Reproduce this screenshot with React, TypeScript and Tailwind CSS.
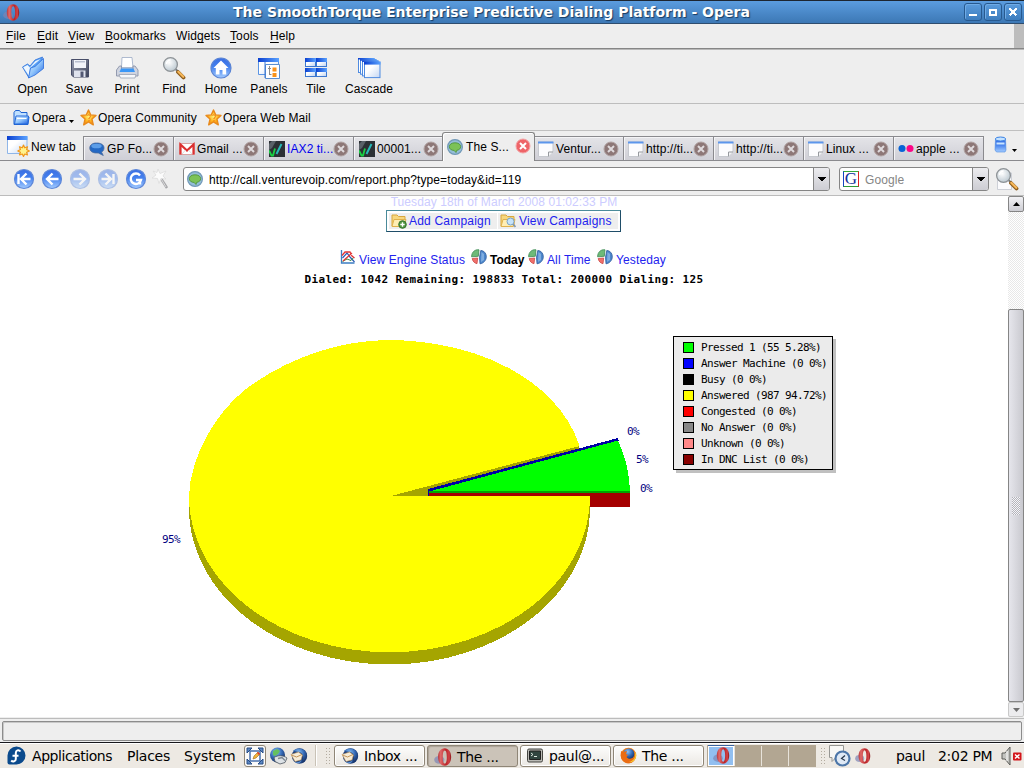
import type { ReactNode } from "react";

const SANS = "font-['Liberation_Sans',sans-serif]";
const DEJA = "font-['DejaVu_Sans',sans-serif]";

function Defs() {
  return (
    <svg className="block size-0" aria-hidden="true">
      <defs>
        <linearGradient id="blue" x1="0" y1="0" x2="0" y2="1">
          <stop offset="0" stopColor="#3a6ee2" />
          <stop offset="0.45" stopColor="#4581ee" />
          <stop offset="1" stopColor="#a4ccff" />
        </linearGradient>
        <linearGradient id="folder" x1="0" y1="0" x2="1" y2="1">
          <stop offset="0" stopColor="#e8f4ff" />
          <stop offset="0.5" stopColor="#8fc4fb" />
          <stop offset="1" stopColor="#1b5fe0" />
        </linearGradient>
        <linearGradient id="pane" x1="0" y1="0" x2="1" y2="1">
          <stop offset="0.4" stopColor="#ffffff" />
          <stop offset="1" stopColor="#c3d6f3" />
        </linearGradient>
        <linearGradient id="bar" x1="0" y1="0" x2="1" y2="0">
          <stop offset="0" stopColor="#0a3fd0" />
          <stop offset="1" stopColor="#5aa2ff" />
        </linearGradient>
        <linearGradient id="steel" x1="0" y1="0" x2="1" y2="1">
          <stop offset="0" stopColor="#9aa0b4" />
          <stop offset="1" stopColor="#3c4258" />
        </linearGradient>
        <linearGradient id="red" x1="0" y1="0" x2="1" y2="0">
          <stop offset="0" stopColor="#b8383c" />
          <stop offset="0.2" stopColor="#e06a6a" />
          <stop offset="0.6" stopColor="#b82428" />
          <stop offset="0.85" stopColor="#d24448" />
          <stop offset="1" stopColor="#8a1418" />
        </linearGradient>
        <radialGradient id="glass" cx="0.4" cy="0.35" r="0.7">
          <stop offset="0" stopColor="#ffffff" />
          <stop offset="1" stopColor="#b9c6cf" />
        </radialGradient>
        <radialGradient id="star" cx="0.5" cy="0.45" r="0.6">
          <stop offset="0" stopColor="#fff27a" />
          <stop offset="0.5" stopColor="#ffb520" />
          <stop offset="1" stopColor="#f07c10" />
        </radialGradient>
        <radialGradient id="globe" cx="0.4" cy="0.3" r="0.8">
          <stop offset="0" stopColor="#8cc4f8" />
          <stop offset="0.5" stopColor="#3468b4" />
          <stop offset="1" stopColor="#12244e" />
        </radialGradient>
      </defs>
    </svg>
  );
}

function OperaIcon({ size = 17 }: { size?: number }) {
  return (
    <svg width={size} height={size} viewBox="0 0 17 17" className="block shrink-0">
      <ellipse cx="5" cy="11.200" rx="4.800" ry="3.700" fill="#7e84b4" opacity="0.700" />
      <path fillRule="evenodd" fill="url(#red)" d="M10 .3c3.800 0 6.200 3.500 6.200 8.200s-2.400 8.200-6.200 8.200-6.200-3.500-6.200-8.200S6.200.3 10 .3zM10.200 2.300c-1.300 0-1.900 2.600-1.900 6.200s.6 6.200 1.900 6.200 1.900-2.600 1.900-6.200-.6-6.200-1.900-6.200z" />
    </svg>
  );
}

function OpenIcon() {
  return (
    <svg width="24" height="24" viewBox="0 0 24 24">
      <path d="M1.500 11l5-3 2.500 2L14 4l7.500-3-1 5L8 22z" fill="#5aa0f4" stroke="#2f72dc" strokeWidth="0.800" />
      <path d="M2.200 11.300L6.500 9l2.300 2.500L14.500 5l5-2L9 12 8 20z" fill="#eef7ff" />
      <path d="M7.500 22L9.500 12l4.500-1.500 8.500-8v10L14 19z" fill="url(#folder)" stroke="#2a6cdc" strokeWidth="0.800" strokeLinejoin="round" />
    </svg>
  );
}

function SaveIcon() {
  return (
    <svg width="24" height="24" viewBox="0 0 24 24">
      <path d="M3.500 3.500h17v17.500H5.500l-2-2z" fill="url(#steel)" stroke="#474d68" />
      <path d="M6 4h12v8H6z" fill="#f1f3f9" />
      <path d="M7 5h10v1.500H7z" fill="#b8bfd0" />
      <path d="M6 14.500h11.500V21H6z" fill="#dfe3ee" />
      <path d="M12.500 15.500h3V21h-3z" fill="#525873" />
    </svg>
  );
}

function PrintIcon() {
  return (
    <svg width="24" height="24" viewBox="0 0 24 24">
      <path d="M7 1.500h10l1 10H6.500z" fill="#fff" stroke="#9aaac4" strokeWidth="0.800" />
      <path d="M4.500 10h2v3h11.500v-3h2l3 4v6H1.500v-6z" fill="#cfd4e0" stroke="#8b93a8" strokeWidth="0.900" />
      <path d="M6 12.500h12.500l1.500 3.500H4.500z" fill="#3a97f7" />
      <path d="M4 18.500h17l-1 3.500H5.500z" fill="#f6f8fb" stroke="#9ba2b4" strokeWidth="0.800" />
    </svg>
  );
}

function FindIcon({ page = false }: { page?: boolean }) {
  return (
    <svg width="24" height="24" viewBox="0 0 24 24">
      {page && <path d="M2.500 6h14v16.500h-14z" fill="#fbfbfd" stroke="#c3c7cf" strokeWidth="0.800" />}
      <path d="M13.500 13l3 3" stroke="#777b80" strokeWidth="2" />
      <path d="M16 16l5.500 5.500" stroke="#8c5a18" strokeWidth="3.800" strokeLinecap="round" />
      <path d="M16.300 15.800l5 5" stroke="#f6b75a" strokeWidth="2.200" strokeLinecap="round" />
      <circle cx="8.500" cy="8.500" r="6.900" fill="url(#glass)" stroke="#8d9296" strokeWidth="1.300" />
      <path d="M4.500 8a4 4 0 0 1 4-4" stroke="#fff" strokeWidth="1.500" fill="none" />
    </svg>
  );
}

function HomeIcon() {
  return (
    <svg width="24" height="24" viewBox="0 0 24 24">
      <circle cx="12" cy="12" r="10" fill="url(#blue)" stroke="#5a84d4" strokeWidth="1.200" />
      <path d="M12 4.500l7.500 7.500h-2.300v6.500h-3.700v-4.500h-3v4.500H6.800V12H4.500z" fill="#fff" />
    </svg>
  );
}

function PanelsIcon() {
  return (
    <svg width="24" height="24" viewBox="0 0 24 24">
      <path d="M1.500 2.500h20v16h-20z" fill="url(#pane)" stroke="#5a94e4" />
      <path d="M1 2h21v4H1z" fill="url(#bar)" />
      <path d="M8.500 8.500h14v14h-14z" fill="#fff" stroke="#5b8fd0" />
      <path d="M8 6v16" stroke="#3c78d4" />
      <path d="M12.500 10v9M11 12.500h3M12.500 18.500h2" stroke="#8c8c8c" fill="none" />
      <path d="M15.500 11.500h4v4h-4zM15.500 17h4v4h-4z" fill="#fa9218" />
    </svg>
  );
}

function TileIcon() {
  return (
    <svg width="24" height="24" viewBox="0 0 24 24" shapeRendering="crispEdges">
      {[1, 12].map((x) =>
        [2, 12].map((y) => (
          <g key={`${x}-${y}`}>
            <rect x={x} y={y} width="11" height="9" fill="#3c78d0" />
            <rect x={x + 1} y={y + 1} width="9" height="7" fill="url(#pane)" />
            <rect x={x} y={y} width="11" height="4" fill="url(#bar)" />
          </g>
        )),
      )}
    </svg>
  );
}

function CascadeIcon() {
  return (
    <svg width="24" height="24" viewBox="0 0 24 24">
      {[0, 2, 4, 6].map((d) => (
        <g key={d}>
          <rect x={1.500 + d} y={2.500 + d * 0.600} width="15.500" height={14 + d * 0.250} fill="url(#pane)" stroke="#4f8be0" />
          <rect x={1 + d} y={2 + d * 0.600} width="16.500" height={d === 6 ? 3 : 1.500} fill="url(#bar)" />
        </g>
      ))}
    </svg>
  );
}

function StarIcon() {
  return (
    <svg width="17" height="17" viewBox="0 0 17 17" className="shrink-0">
      <path d="M8.500 1l2.200 4.900 5.300.5-4 3.700 1.300 5.700-4.800-2.900-4.800 2.900L5 10.100 1 6.400l5.300-.5z" fill="url(#star)" stroke="#e88a1c" strokeWidth="1.400" strokeLinejoin="round" />
      <path d="M7.500 6.500a1.600 1.600 0 1 1 1.500 2.500v1M9 11v1.200" stroke="#ee7412" fill="none" />
    </svg>
  );
}

function FolderIcon() {
  return (
    <svg width="17" height="17" viewBox="0 0 17 17" className="shrink-0">
      <path d="M1 3.500l1.500-2h4l1.500 2h6V8H16l-1 7.500H1z" fill="#bfe0ff" stroke="#1d62d0" strokeLinejoin="round" />
      <path d="M3 7h12.500l-1 8H1.500z" fill="url(#folder)" stroke="#2468da" />
      <path d="M4 9.500h9.500" stroke="#fff" />
    </svg>
  );
}

function NewTabIcon() {
  return (
    <svg width="23" height="21" viewBox="0 0 23 21" className="shrink-0">
      <path d="M.5.500h19.500v17H.5z" fill="url(#pane)" stroke="#8fb6e8" />
      <path d="M0 0h20.500v4H0z" fill="url(#bar)" />
      <path d="M16.500 9l1.200 2.800 2.800-1-.9 2.700 2.800 1.500-2.800 1.200.9 2.700-2.800-.9-1.200 2.500-1.200-2.500-2.800.9.900-2.700-2.600-1.200 2.600-1.500-.9-2.700 2.800 1z" fill="#fff38c" stroke="#f0971b" strokeWidth="1.200" strokeLinejoin="round" />
    </svg>
  );
}

type TabIconKind = "chat" | "gmail" | "bolt" | "bubble" | "page" | "flickr";

function TabIcon({ kind }: { kind: TabIconKind }) {
  return (
    <svg width="16" height="16" viewBox="0 0 16 16" className="shrink-0">
      {kind === "chat" && (
        <>
          <path d="M7.500 2c4.500 0 7.500 1.800 7.500 5 0 2-1 3.300-2.500 4.100l1.800 3.400-5-2.500H7.500C3.300 12 .8 10 .8 7S3.300 2 7.500 2z" fill="#2468c4" stroke="#4a6a9a" strokeWidth="0.800" />
          <ellipse cx="7.500" cy="5" rx="5.200" ry="2.300" fill="#5c9de8" />
        </>
      )}
      {kind === "gmail" && (
        <>
          <path d="M.5 2.500h15v11H.5z" fill="#fff" stroke="#d9a3a3" />
          <path d="M1.500 13.500V3.500l6.500 6 6.500-6v10" fill="none" stroke="#dc3030" strokeWidth="2.200" />
          <path d="M3 13l3.500-4M13 13L9.500 9" stroke="#ddd" />
        </>
      )}
      {kind === "bolt" && (
        <>
          <path d="M0 0h16v16H0z" fill="#2b2f34" />
          <path d="M0 3l3-3h4L3 7l-3 2z" fill="#596068" />
          <path d="M0 9.500l2.500 5h1.500l2-7" fill="none" stroke="#19d043" strokeWidth="1.800" />
          <path d="M7.500 13L12.500 3" stroke="#27b9b7" strokeWidth="2" />
        </>
      )}
      {kind === "bubble" && (
        <>
          <circle cx="8" cy="8" r="7.400" fill="#94bdd8" stroke="#7198b6" strokeWidth="1.200" />
          <path d="M8 3.800c3.400 0 5.700 1.600 5.700 3.900 0 1.900-1.700 3.300-4 3.700L9 13.500l-1.800-2C4.300 11.300 2.300 9.900 2.300 7.700 2.300 5.400 4.600 3.800 8 3.800z" fill="#7cc257" stroke="#4b9036" strokeWidth="0.800" />
        </>
      )}
      {kind === "page" && (
        <>
          <path d="M.5 1h14.500v9.500l-4.500 5H.5z" fill="#fcfcfe" stroke="#c6c9cf" />
          <path d="M0 .5h15.500v2H0z" fill="#5c96ec" />
          <path d="M10.500 15.500v-4.500h4.500" fill="#f2f2f4" stroke="#96999e" />
        </>
      )}
      {kind === "flickr" && (
        <>
          <circle cx="4" cy="7.500" r="3.500" fill="#0763d6" />
          <circle cx="12" cy="7.500" r="3.500" fill="#fc0786" />
        </>
      )}
    </svg>
  );
}

function CloseDot({ active = false }: { active?: boolean }) {
  return (
    <svg width="16" height="16" viewBox="0 0 16 16" className={active ? "-mt-[2px] shrink-0" : "shrink-0"}>
      <circle cx="8" cy="8" r="7" fill={active ? "#ee6468" : "#8d7777"} stroke={active ? "#f4a3a5" : "#b0a2a2"} />
      <path d="M5 5l6 6M11 5l-6 6" stroke={active ? "#fff" : "#dfdadd"} strokeWidth="2" />
    </svg>
  );
}

const tabs: { kind: TabIconKind; label: string; unread?: boolean; active?: boolean }[] = [
  { kind: "chat", label: "GP Fo..." },
  { kind: "gmail", label: "Gmail ..." },
  { kind: "bolt", label: "IAX2 ti...", unread: true },
  { kind: "bolt", label: "00001..." },
  { kind: "bubble", label: "The S...", active: true },
  { kind: "page", label: "Ventur..." },
  { kind: "page", label: "http://ti..." },
  { kind: "page", label: "http://ti..." },
  { kind: "page", label: "Linux ..." },
  { kind: "flickr", label: "apple ..." },
];

function Tab({ tab }: { tab: (typeof tabs)[number] }) {
  if (tab.active) {
    return (
      <div className="z-10 -mr-[2px] -ml-px flex h-[29px] w-[93px] shrink-0 items-center rounded-t-[3px] border border-b-0 border-[#848484] bg-[#eeeeee] pl-[4px] shadow-[inset_1px_1px_0_#fff]">
        <TabIcon kind={tab.kind} />
        <span className="ml-[3px] w-[49px] whitespace-nowrap">{tab.label}</span>
        <CloseDot active />
      </div>
    );
  }
  const late = tab.kind === "page" || tab.kind === "flickr";
  return (
    <div className={`flex h-[25px] w-[90px] shrink-0 items-center border border-r-0 border-[#8a8a8e] bg-linear-to-b from-[#e4e4e8] to-[#cfcfd6] shadow-[inset_1px_1px_0_#f4f4f6] ${late ? "pl-[4px]" : "pl-[5px]"}`}>
      <TabIcon kind={tab.kind} />
      <span className={`ml-[2px] whitespace-nowrap ${late ? "w-[47px]" : "w-[46px]"} ${tab.unread ? "text-[#0000ee]" : ""}`}>{tab.label}</span>
      <CloseDot />
    </div>
  );
}

function NavButton({ kind, dim = false }: { kind: "first" | "back" | "next" | "last" | "reload"; dim?: boolean }) {
  return (
    <svg width="28" height="22" viewBox="-14 -11 28 22" className={dim ? "shrink-0 opacity-45" : "shrink-0"}>
      <circle r="9.500" fill="url(#blue)" stroke="#5f88d8" strokeWidth="1.200" />
      <g stroke="#fff" strokeWidth="2.400" fill="none">
        {kind === "first" && <path d="M-5.500-5v10M6.500 0H-3M2.500-5.500L-3 0l5.500 5.500" />}
        {kind === "back" && <path d="M6.500 0H-4M.5-5.500L-5 0 .5 5.500" />}
        {kind === "next" && <path d="M-6.500 0H4M-.5-5.500L5 0l-5.500 5.500" />}
        {kind === "last" && <path d="M5.500-5v10M-6.500 0H3M-2.500-5.500L3 0l-5.500 5.500" />}
        {kind === "reload" && <path d="M4-3.500A5.200 5.200 0 1 0 5 1H0M4 .5v5" />}
      </g>
    </svg>
  );
}

function Down() {
  return (
    <svg width="8" height="5" viewBox="0 0 8 5" shapeRendering="crispEdges">
      <path d="M0 0h8L4 4.500z" />
    </svg>
  );
}

function PieIcon() {
  return (
    <svg width="16" height="16" viewBox="0 0 16 16" className="-mt-[5px] shrink-0">
      <path d="M7.300 7.300L8 .8C4 .2 .6 3 .6 7.800z" fill="#6dba78" stroke="#3f8a55" strokeWidth="0.800" />
      <path d="M6.700 9L1.200 9.500c.4 2.800 2.300 4.700 4.800 5.200z" fill="#f0706c" stroke="#cc4a48" strokeWidth="0.800" />
      <path d="M8.500 8.200L9.800 1.400c3 .2 5.400 2.600 5.500 6 .1 3.800-2.600 7-6.300 7.400z" fill="#4c86cb" stroke="#2d5c9d" strokeWidth="0.800" />
      <path d="M10.500 3l2.500 2v6l-3 2z" fill="#8cb6e5" opacity="0.800" />
    </svg>
  );
}

function CampaignIcon({ view = false }: { view?: boolean }) {
  return (
    <svg width="16" height="16" viewBox="0 0 16 16" className="shrink-0">
      <path d="M1 2h5l1.500 1.500H14V13H1z" fill="#f7d77e" stroke="#d8a63c" />
      <path d="M3 6.500h12L13 13.500H1z" fill="#ffeeb4" stroke="#e0b24d" />
      {view ? (
        <>
          <circle cx="10.500" cy="8.500" r="3.500" fill="#c6e3fa" stroke="#7ba4c6" />
          <path d="M13 11l2.500 3" stroke="#8299ae" strokeWidth="1.800" />
        </>
      ) : (
        <>
          <circle cx="11.500" cy="11.500" r="3.800" fill="#4f9440" stroke="#35752f" />
          <path d="M11.500 9.300v4.400M9.300 11.500h4.400" stroke="#fff" strokeWidth="1.400" />
        </>
      )}
    </svg>
  );
}

const legend: [string, string][] = [
  ["bg-[#00ff00]", "Pressed 1 (55 5.28%)"],
  ["bg-[#0000ff]", "Answer Machine (0 0%)"],
  ["bg-[#000000]", "Busy (0 0%)"],
  ["bg-[#ffff00]", "Answered (987 94.72%)"],
  ["bg-[#ff0000]", "Congested (0 0%)"],
  ["bg-[#888888]", "No Answer (0 0%)"],
  ["bg-[#ff8888]", "Unknown (0 0%)"],
  ["bg-[#880000]", "In DNC List (0 0%)"],
];

function Pie() {
  return (
    <svg width="673" height="431" viewBox="0 286 673 431" className="block shrink-0" shapeRendering="crispEdges">
      <path d="M189 497V508A200.500 156.500 0 0 0 590 508V497z" fill="#a5a500" />
      <path d="M391 496L579 446V449L428 490V496z" fill="#a5a500" />
      <path d="M428 489L618 438L619 441L430 492V496H428z" fill="#0000a5" />
      <path d="M429 491.500L618 440.500Q629 464 630 491H429z" fill="#00ff00" />
      <path d="M429 491H630V493H429z" fill="#00a500" />
      <path d="M429 493H630V507H590V496H429z" fill="#a50000" />
      <path d="M391 496L579.500 446C562 391 502 355 438 344.500Q412 340 390 340C338 340 286 359 246 389C216 412 190 457 189 496A200.500 156.300 0 0 0 590 496z" fill="#ffff00" />
      <g className="fill-[#000080] font-['DejaVu_Sans_Mono',monospace] text-[11px] tracking-[-0.620px]">
        <text x="162" y="543">95%</text>
        <text x="627" y="435">0%</text>
        <text x="636" y="463">5%</text>
        <text x="640" y="492">0%</text>
      </g>
    </svg>
  );
}

function WinButton({ children }: { children: ReactNode }) {
  return (
    <div className="flex size-[18px] items-center justify-center rounded-[3px] border border-[#27598f] bg-linear-to-b from-[#5a9bdc] to-[#3d7dbe] shadow-[inset_1px_1px_0_#6fabe6]">
      <svg width="10" height="10" viewBox="0 0 10 10" shapeRendering="crispEdges">{children}</svg>
    </div>
  );
}

function Thunderbird() {
  return (
    <svg width="18" height="18" viewBox="0 0 18 18" className="shrink-0">
      <circle cx="9.500" cy="9" r="7.700" fill="#1c3f7c" />
      <path d="M3 4C6 0 14 .5 16.500 6c1 4-1 8-4 10C14 11 13.500 6 9 5z" fill="url(#globe)" />
      <path d="M1 7.500L8.500 5l4 3-1.500 5-6 1.500z" fill="#f6ecd8" stroke="#b98d52" strokeWidth="0.600" />
      <path d="M1.500 8l5 2 5.500-2.500" stroke="#c08a48" fill="none" strokeWidth="0.900" />
      <path d="M4 14.500c3 1.500 6 .5 8-1.500-1 3-4 4.500-8 1.500z" fill="#5d94d6" />
    </svg>
  );
}

function Task({ icon, label, active = false }: { icon: ReactNode; label: string; active?: boolean }) {
  return (
    <div className={`flex h-[22px] w-[91px] shrink-0 items-center rounded-[3px] border border-[#8f8677] pl-[6px] ${active ? "bg-[#cbc3b8] pt-[2px] shadow-[inset_1px_1px_1px_#aba296]" : "bg-linear-to-b from-[#fdfdfc] to-[#ebe8e3] shadow-[inset_0_0_0_1px_#fff]"}`}>
      {icon}
      <span className="ml-[5px] whitespace-nowrap text-[14px] tracking-[-0.300px]">{label}</span>
    </div>
  );
}

function Grip() {
  return <div className="h-[17px] w-[5px] shrink-0 bg-[radial-gradient(#b3aca0_40%,transparent_45%)] bg-size-[3px_3px]" />;
}

export default function App() {
  return (
    <div className={`flex h-[768px] w-[1024px] flex-col overflow-hidden bg-[#eeeeee] text-[12px] leading-none tracking-[0.100px] text-black ${SANS}`}>
      {/* Title bar */}
      <header className={`flex h-[24px] shrink-0 items-center border-t border-b border-t-[#1d2530] border-b-[#2f4d6e] bg-linear-to-b from-[#5b9cdf] to-[#3c78b5] pl-[3px] pr-[2px] ${DEJA}`}>
        <Defs />
        <OperaIcon />
        <h1 className="ml-[213px] w-[518px] shrink-0 whitespace-nowrap text-[14px] leading-[22px] font-bold tracking-[0px] text-white [text-shadow:1px_1px_1px_#173a60]">
          The SmoothTorque Enterprise Predictive Dialing Platform - Opera
        </h1>
        <div className="ml-auto flex gap-[2px]">
          <WinButton><path d="M1 7h8v2H1z" fill="#fff" /></WinButton>
          <WinButton><path d="M2 3h6v5H2z" fill="none" stroke="#fff" strokeWidth="1.500" /></WinButton>
          <WinButton><path d="M1.500 1.500l7 7M8.500 1.500l-7 7" stroke="#fff" strokeWidth="2.200" /></WinButton>
        </div>
      </header>

      {/* Menu bar */}
      <nav className="flex h-[26px] shrink-0 border-b border-[#b8b8b8]">
        <div className="flex w-[1014px] items-center border-b border-[#868686] pl-[6px] leading-[22px]">
          <span className="w-[31px]"><u className="underline-offset-2">F</u>ile</span>
          <span className="w-[31px]"><u className="underline-offset-2">E</u>dit</span>
          <span className="w-[37px]"><u className="underline-offset-2">V</u>iew</span>
          <span className="w-[71px]"><u className="underline-offset-2">B</u>ookmarks</span>
          <span className="w-[54px]">Wid<u className="underline-offset-2">g</u>ets</span>
          <span className="w-[40px]"><u className="underline-offset-2">T</u>ools</span>
          <span><u className="underline-offset-2">H</u>elp</span>
        </div>
        <div className="grow border-b border-[#868686] bg-[#bdbdbd]" />
      </nav>

      {/* Main toolbar */}
      <div className="flex h-[54px] shrink-0 border-b border-[#bdbdbd] pl-[9px] text-center">
        {[
          { w: "w-[47px]", icon: <OpenIcon />, label: "Open" },
          { w: "w-[47px]", icon: <SaveIcon />, label: "Save" },
          { w: "w-[48px]", icon: <PrintIcon />, label: "Print" },
          { w: "w-[46px]", icon: <FindIcon />, label: "Find" },
          { w: "w-[48px]", icon: <HomeIcon />, label: "Home" },
          { w: "w-[48px]", icon: <PanelsIcon />, label: "Panels" },
          { w: "w-[46px]", icon: <TileIcon />, label: "Tile" },
          { w: "w-[60px]", icon: <CascadeIcon />, label: "Cascade" },
        ].map((b) => (
          <div key={b.label} className={`flex flex-col items-center pt-[6px] ${b.w}`}>
            {b.icon}
            <span className="mt-[3px]">{b.label}</span>
          </div>
        ))}
      </div>

      {/* Personal bar */}
      <div className="flex h-[27px] shrink-0 items-center border-b border-[#c0c0c0] pl-[13px]">
        <FolderIcon />
        <span className="mt-[2px] ml-[2px] w-[37px]">Opera</span>
        <svg width="5" height="3" viewBox="0 0 5 3" className="mt-[8px] mr-[6px]"><path d="M0 0h5L2.500 3z" /></svg>
        <StarIcon />
        <span className="mt-[2px] ml-[1px] w-[107px] whitespace-nowrap">Opera Community</span>
        <StarIcon />
        <span className="mt-[2px] ml-[1px] whitespace-nowrap">Opera Web Mail</span>
      </div>

      {/* Tab bar */}
      <div className="flex h-[30px] shrink-0 items-end shadow-[inset_0_-1px_0_#8a8a8e]">
        <div className="flex h-[25px] w-[83px] items-start pl-[7px]">
          <NewTabIcon />
          <span className="mt-[5px] ml-[1px] whitespace-nowrap">New tab</span>
        </div>
        {tabs.map((t, i) => <Tab key={i} tab={t} />)}
        <div className="flex h-[25px] w-[41px] items-start border-l border-[#8a8a8e] pl-[9px]">
          <svg width="15" height="17" viewBox="0 0 15 17">
            <path d="M2.500 3h10l.5 11-1 2H3.500l-1.500-2z" fill="url(#blue)" stroke="#4c8be0" strokeWidth="0.600" />
            <ellipse cx="7.500" cy="3" rx="5.200" ry="2" fill="#c4e2ff" stroke="#3a82e4" />
            <path d="M3.500 7.500h8" stroke="#c8e4ff" strokeWidth="2" />
          </svg>
          <svg width="5" height="3" viewBox="0 0 5 3" className="mt-[13px] ml-[4px]"><path d="M0 0h5L2.500 3z" /></svg>
        </div>
      </div>

      {/* Address bar */}
      <div className="flex h-[35px] shrink-0 items-center border-b border-[#bcbcbc] pt-[2px] pl-[10px]">
        <NavButton kind="first" />
        <NavButton kind="back" />
        <NavButton kind="next" dim />
        <NavButton kind="last" dim />
        <NavButton kind="reload" />
        <svg width="20" height="22" viewBox="0 0 20 22" className="mr-[13px] shrink-0">
          <path d="M10 9l7 11" stroke="#a6a6a8" strokeWidth="2.500" />
          <path d="M10 9l6 10" stroke="#d9d9db" strokeWidth="1" />
          <path d="M8 1l2 4.500 6-2.500-3 5 3 3-5-.5-2 5-1.500-5L2 10l4-3-3-4 4 1.500z" fill="#fbfbfb" stroke="#dcdcdc" strokeWidth="0.800" />
        </svg>
        <div className="flex h-[24px] w-[647px] shrink-0 items-center rounded-[3px] border border-[#858585] bg-white pl-[3px]">
          <TabIcon kind="bubble" />
          <span className="mt-[2px] ml-[6px] grow whitespace-nowrap">http://call.venturevoip.com/report.php?type=today&amp;id=119</span>
          <div className="flex h-full w-[16px] items-center justify-center rounded-r-[2px] border-l border-[#858585] bg-linear-to-b from-[#ececef] to-[#cdcdd3]"><Down /></div>
        </div>
        <div className="ml-[9px] flex h-[24px] w-[150px] shrink-0 items-center rounded-[3px] border border-[#858585] bg-white pl-[3px]">
          <div className="flex size-[16px] items-center justify-center border border-[#2f9b34] border-t-[#35a839] border-r-[#d22] border-l-[#1444c4] font-['Liberation_Serif',serif] text-[17px] leading-[14px] tracking-[0px] text-[#14309c]">G</div>
          <span className="mt-[2px] ml-[6px] grow text-[#858585]">Google</span>
          <div className="flex h-full w-[16px] items-center justify-center rounded-r-[2px] border-l border-[#858585] bg-linear-to-b from-[#ececef] to-[#cdcdd3]"><Down /></div>
        </div>
        <div className="ml-[6px] shrink-0"><FindIcon page /></div>
      </div>

      {/* Page */}
      <div className="flex h-[521px] shrink-0 bg-white">
        <main className="w-[1008px] overflow-hidden">
          <div className="h-[14px] text-center text-[12px] leading-[12px] tracking-[0.080px] text-[#ccccff]">Tuesday 18th of March 2008 01:02:33 PM</div>
          <div className="ml-[386px] flex h-[22px] w-[235px] items-center border border-[#1f4d68] border-t-[#4a8a9a] border-l-[#4a8a9a] pl-[2px] tracking-[0.200px] text-[#2222ee]">
            <div className="flex h-[16px] w-[108px] items-center bg-[#eeeeee] pl-[2px]">
              <CampaignIcon /><span className="ml-[2px] whitespace-nowrap">Add Campaign</span>
            </div>
            <div className="ml-px flex h-[16px] w-[120px] items-center bg-[#eeeeee] pl-[2px]">
              <CampaignIcon view /><span className="ml-[3px] whitespace-nowrap">View Campaigns</span>
            </div>
          </div>
          <div className="mt-[16px] flex h-[25px] items-center pb-[2px] pl-[340px] tracking-[0.120px] text-[#2222ee]">
            <svg width="16" height="16" viewBox="0 0 16 16" className="-mt-[5px] shrink-0">
              <path d="M1.500 1v13h13" stroke="#3d7dc2" fill="none" strokeWidth="1.300" />
              <path d="M2.500 9L7 4l3 4 4.500 5" stroke="#2b5bb4" fill="none" strokeWidth="1.200" />
              <path d="M2.500 12.500L7 10l4 1.500 3-3.500" stroke="#348b3c" fill="none" />
              <path d="M2 6.500l3-3.500h5l2 4 2.500 2M3 12l9-8" stroke="#e33636" fill="none" strokeWidth="1.300" />
            </svg>
            <span className="ml-[3px] w-[112px] whitespace-nowrap">View Engine Status</span>
            <PieIcon />
            <b className="ml-[3px] w-[38px] tracking-[0px] text-black">Today</b>
            <PieIcon />
            <span className="ml-[3px] w-[50px] whitespace-nowrap">All Time</span>
            <PieIcon />
            <span className="ml-[3px]">Yesteday</span>
          </div>
          <div className="h-[13px] text-center font-['DejaVu_Sans_Mono',monospace] text-[11px] leading-[13px] font-bold tracking-[0.380px]">
            Dialed: 1042 Remaining: 198833 Total: 200000 Dialing: 125
          </div>
          <div className="flex items-start">
            <Pie />
            <ul className="mt-[50px] h-[134px] w-[160px] shrink-0 border border-black bg-[#ebebeb] pt-[2px] pl-[9px] shadow-[3px_3px_0_#c0c0c0]">
              {legend.map(([color, label]) => (
                <li key={label} className="flex h-[16px] items-center">
                  <span className={`size-[11px] border border-black ${color}`} />
                  <span className="ml-[7px] whitespace-nowrap font-['DejaVu_Sans_Mono',monospace] text-[11px] tracking-[-0.620px]">{label}</span>
                </li>
              ))}
            </ul>
          </div>
        </main>
        <div className="flex w-[16px] flex-col bg-[#f4f4f4]">
          <div className="flex h-[16px] items-center justify-center rounded-[2px] border border-[#858585] bg-linear-to-b from-[#f2f2f5] to-[#cdcdd3]">
            <svg width="7" height="4" viewBox="0 0 7 4"><path d="M0 4h7L3.500 0z" /></svg>
          </div>
          <div className="h-[97px] bg-[repeating-conic-gradient(#ffffff_0_25%,#e8e8e8_0_50%)] bg-size-[2px_2px]" />
          <div className="flex h-[393px] items-center justify-center rounded-[2px] border border-[#858585] bg-linear-to-r from-[#e6e6ec] to-[#c9c9cf]">
            <div className="h-[18px] w-[8px] bg-[repeating-conic-gradient(#f4f4f8_0_25%,#b4b4ba_0_50%)] bg-size-[2px_2px]" />
          </div>
          <div className="flex h-[15px] items-center justify-center rounded-[2px] border border-[#c9c9c9] bg-[#ececee]">
            <svg width="7" height="4" viewBox="0 0 7 4"><path d="M0 0h7L3.500 4z" fill="#707070" /></svg>
          </div>
        </div>
      </div>

      {/* Status bar */}
      <div className="h-[26px] shrink-0 border-b border-[#18181c] pt-px">
        <div className="h-[24px] border-t border-[#bcbcbc] pt-[2px] pr-[2px] pl-[2px]">
          <div className="h-[20px] rounded-[2px] border border-[#8c8c8c] shadow-[inset_1px_1px_0_#c8c8c8]" />
        </div>
      </div>

      {/* Desktop panel */}
      <footer className={`flex h-[25px] shrink-0 items-center bg-[#ede9e3] pl-[7px] text-[14px] shadow-[inset_0_1px_0_#fff] ${DEJA}`}>
        <svg width="19" height="19" viewBox="0 0 19 19" className="shrink-0">
          <path d="M9.500.5a9 9 0 1 1 0 18H2.500a2 2 0 0 1-2-2v-7a9 9 0 0 1 9-9z" fill="#0b4a8c" />
          <path d="M13.500 5.500C11.500 3 8.800 4.500 8.800 7v6c0 2.500-3 3.200-4.600 1.500M5.500 9.800h6" stroke="#fff" strokeWidth="2" fill="none" />
        </svg>
        <span className="ml-[6px] w-[95px] tracking-[-0.450px]">Applications</span>
        <span className="w-[57px] tracking-[-0.250px]">Places</span>
        <span className="w-[60px] tracking-[-0.100px]">System</span>
        <div className="flex size-[22px] shrink-0 items-center justify-center rounded-[3px] border border-[#8f8677] bg-[#fbfaf8]">
          <svg width="18" height="18" viewBox="0 0 18 18">
            <path d="M4 4h10v10H4z" fill="#fff" stroke="#4a72ad" strokeWidth="1.500" />
            <path d="M1 1h5L1 6zM17 1v5l-5-5zM1 17v-5l5 5zM17 17h-5l5-5z" fill="#5d87c2" stroke="#274d86" />
            <path d="M7 12l1-3 4-4 2 2-4 4z" fill="#f2b63b" stroke="#a06c1a" strokeWidth="0.600" />
            <path d="M11.500 5.500l2 2" stroke="#d33" strokeWidth="1.500" />
          </svg>
        </div>
        <svg width="20" height="18" viewBox="0 0 20 18" className="ml-[3px] shrink-0">
          <circle cx="8.500" cy="8" r="7.500" fill="url(#globe)" />
          <path d="M4 4l4-2 3 2-2 3-3 2-2-1z" fill="#65c060" />
          <path d="M5 10.500c4-2.500 9-2.500 13 .5l-2 4.500-5 1.500-5-2.500z" fill="#dde2e6" stroke="#4d5560" strokeWidth="0.800" />
          <path d="M9 11.500l4-1 3 3" stroke="#7d868f" fill="none" strokeWidth="1.300" />
        </svg>
        <div className="ml-[1px]"><Thunderbird /></div>
        <div className="ml-[7px] h-[21px] w-[2px] border-r border-l border-r-white border-l-[#c9c2b6]" />
        <div className="mr-[4px] ml-[8px]"><Grip /></div>
        <div className="flex gap-[2px]">
          <Task icon={<Thunderbird />} label="Inbox ..." />
          <Task icon={<OperaIcon size={18} />} label="The ..." active />
          <Task
            icon={
              <svg width="17" height="16" viewBox="0 0 17 16" className="shrink-0">
                <rect x="0.500" y="1" width="15" height="13" rx="1.500" fill="#b9b9b4" stroke="#454541" />
                <path d="M2.500 3h11v8.500h-11z" fill="#30453f" stroke="#20201f" />
                <path d="M4 5l2 1.500L4 8M7 8.500h3" stroke="#dde6df" fill="none" />
              </svg>
            }
            label="paul@..."
          />
          <Task
            icon={
              <svg width="17" height="17" viewBox="0 0 17 17" className="shrink-0">
                <circle cx="8.500" cy="8.500" r="7.800" fill="#ef7d16" />
                <circle cx="8.800" cy="7" r="5.600" fill="url(#globe)" />
                <path d="M1 4l2 1 4-1-1 3 2 1-1.500 2c2 3 6 2 8-1 1-3 0-5-1-6 4 4 2.500 12-4 13.200C4 17 .5 12.500.8 8z" fill="#ea6c13" />
                <path d="M14 4c3 5 0 10-5 11 4 1 8-3 7-8z" fill="#f6d033" />
              </svg>
            }
            label="The ..."
          />
        </div>
        <div className="ml-[3px] grid h-[22px] w-[109px] shrink-0 grid-cols-4 gap-px border border-[#b2a692] bg-[#e8e3da]">
          <div className="flex items-center justify-center border border-white bg-[#92bff0] shadow-[0_-1px_0_#3b64a0]"><OperaIcon /></div>
          <div className="bg-[#b2a692]" />
          <div className="bg-[#b2a692]" />
          <div className="bg-[#b2a692]" />
        </div>
        <div className="ml-[4px]"><Grip /></div>
        <svg width="24" height="22" viewBox="0 0 24 22" className="ml-[3px] shrink-0">
          <path d="M1.500.500h14v12H8l-4 4v-4H1.500z" fill="#f7f7f5" stroke="#969692" />
          <circle cx="14.500" cy="13.500" r="7" fill="#dfe9f5" stroke="#4c76a8" strokeWidth="2.200" />
          <path d="M17 10.500l-3.500 3 3.500 2" stroke="#26364a" fill="none" strokeWidth="1.200" />
        </svg>
        <div className="ml-[3px]"><OperaIcon size={16} /></div>
        <span className="ml-[25px] w-[42px] tracking-[-0.300px]">paul</span>
        <span className="w-[63px] whitespace-nowrap tracking-[-0.300px]">2:02 PM</span>
        <svg width="21" height="20" viewBox="0 0 21 20" className="shrink-0">
          <path d="M1 7h3l5-6v18l-5-6H1z" fill="#c4c4c0" stroke="#5c5c58" />
          <path d="M6 5v10" stroke="#fff" />
          <rect x="12" y="6.500" width="8.500" height="8" rx="1" fill="#d3151a" />
          <path d="M14 8.500l4.500 4M18.500 8.500l-4.500 4" stroke="#fff" strokeWidth="1.500" />
        </svg>
      </footer>
    </div>
  );
}
